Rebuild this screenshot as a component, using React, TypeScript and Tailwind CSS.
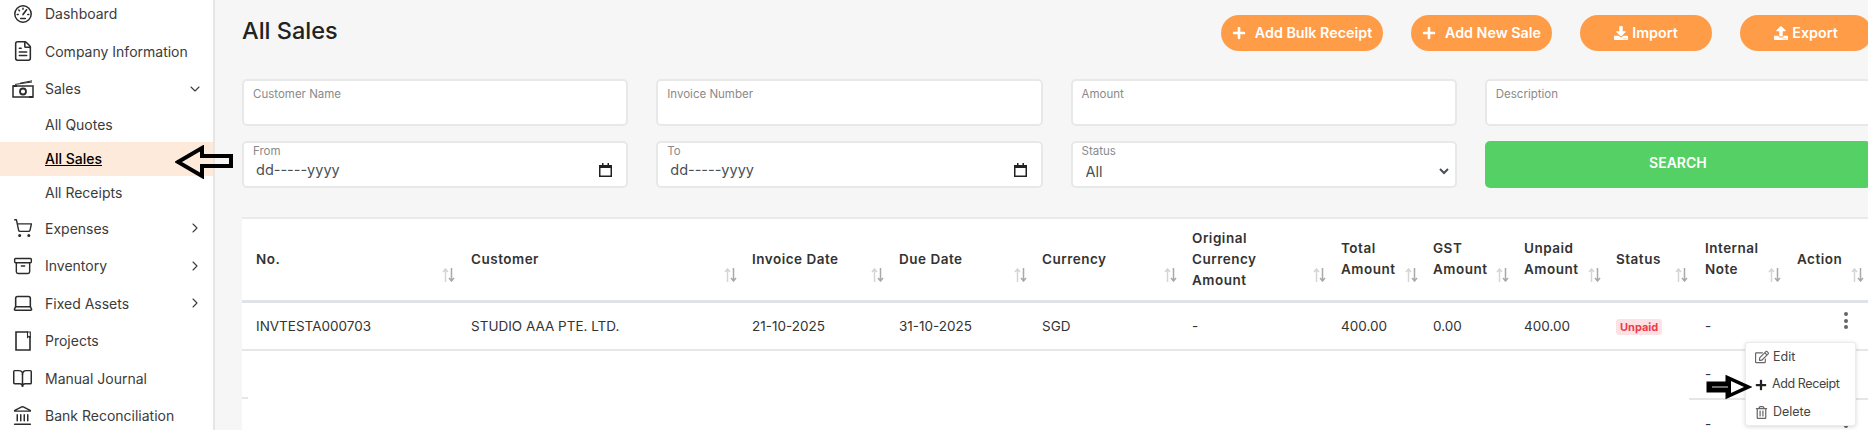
import type { ReactNode } from "react";
import {
  Archive,
  BookOpen,
  ChevronDown,
  ChevronRight,
  FileText,
  Landmark,
  Laptop,
  ShoppingCart,
} from "lucide-react";
import { FaDownload, FaPlus, FaRegEdit, FaRegTrashAlt, FaUpload } from "react-icons/fa";

function DashboardIcon() {
  return (
    <svg width="20" height="20" viewBox="0 0 20 20" fill="none" stroke="currentColor" strokeWidth="1.5" strokeLinecap="round">
      <circle cx="10" cy="10" r="8.2" />
      <path d="M10 10.5 13.6 5.8" strokeWidth="1.7" />
      <path d="M10 4.2v1M5.8 6l.7.7M4.2 10.5h1M14.8 10.5h1" />
      <path d="M7.6 14.4h4.8" />
    </svg>
  );
}

function MoneyIcon() {
  return (
    <svg width="22" height="18" viewBox="0 0 22 18" fill="none" stroke="currentColor" strokeWidth="1.5">
      <rect x="1" y="6" width="20" height="11" />
      <circle cx="11" cy="11.5" r="3" strokeWidth="1.8" />
      <path d="M3 4.4 20 2M8 3.2 20 .8" strokeWidth="1" />
      <path d="M1 6h4M17 17h4" strokeWidth="2" />
    </svg>
  );
}

function NotebookIcon() {
  return (
    <svg width="18" height="20" viewBox="0 0 18 20" fill="none" stroke="currentColor" strokeWidth="1.6">
      <path d="M14 1H2v18h14V5" />
      <path d="M13.5 1h2.8v5.5l-1.4-1-1.4 1z" strokeWidth="1.1" />
    </svg>
  );
}

function NavItem({ icon, label, chevron }: { icon: ReactNode; label: string; chevron?: "down" | "right" }) {
  return (
    <div className="flex h-[37.5px] items-center text-[#3b3b3b]">
      <div className="flex w-[45px] flex-none justify-center pl-[3px] pr-[3px] text-[#2b2b2b]">{icon}</div>
      <span className="flex-1 text-[14px]">{label}</span>
      {chevron === "down" && <ChevronDown className="mr-[10px] size-4" strokeWidth={1.6} />}
      {chevron === "right" && <ChevronRight className="mr-[10px] size-4" strokeWidth={1.6} />}
    </div>
  );
}

function Sidebar() {
  return (
    <aside className="h-[430px] w-[215px] flex-none overflow-hidden border-r-2 border-[#e6e6e6] bg-white">
      <div className="-mt-[5px]">
        <NavItem icon={<DashboardIcon />} label="Dashboard" />
        <NavItem icon={<FileText className="size-[22px]" strokeWidth={1.7} />} label="Company Information" />
        <NavItem icon={<MoneyIcon />} label="Sales" chevron="down" />
        <div className="flex h-[34px] items-center pl-[45px] text-[14px] text-[#3b3b3b]">All Quotes</div>
        <div className="flex h-[34px] items-center bg-[#fdeadb] pl-[45px] text-[14px] font-medium text-black underline">All Sales</div>
        <div className="flex h-[34px] items-center pl-[45px] text-[14px] text-[#3b3b3b]">All Receipts</div>
        <NavItem icon={<ShoppingCart className="size-5" strokeWidth={1.7} />} label="Expenses" chevron="right" />
        <NavItem icon={<Archive className="size-5" strokeWidth={1.7} />} label="Inventory" chevron="right" />
        <NavItem icon={<Laptop className="size-[22px]" strokeWidth={1.7} />} label="Fixed Assets" chevron="right" />
        <NavItem icon={<NotebookIcon />} label="Projects" />
        <NavItem icon={<BookOpen className="size-[21px]" strokeWidth={1.7} />} label="Manual Journal" />
        <NavItem icon={<Landmark className="size-[21px]" strokeWidth={1.7} />} label="Bank Reconciliation" />
      </div>
    </aside>
  );
}

function OrangeButton({ icon, label, className }: { icon: ReactNode; label: string; className: string }) {
  return (
    <button className={`flex h-9 items-center justify-center rounded-[18px] bg-[#ff9c47] pb-[1px] text-[14.3px] font-semibold text-white ${className}`}>
      {icon}
      {label}
    </button>
  );
}

function TextField({ label }: { label: string }) {
  return (
    <div className="h-[47px] rounded-[5px] border-2 border-[#e8e8e8] bg-white px-[9px] pt-[5px]">
      <label className="block text-[11.5px] leading-[16px] text-[#8a8a8a]">{label}</label>
      <input className="w-full text-[14px] outline-none" />
    </div>
  );
}

function DateField({ label }: { label: string }) {
  return (
    <div className="h-[47px] rounded-[5px] border-2 border-[#e8e8e8] bg-white pl-[9px] pr-[14px] pt-[1px]">
      <label className="block text-[11.5px] leading-[15px] text-[#8a8a8a]">{label}</label>
      <div className="flex items-center">
        <input readOnly value="dd-----yyyy" className="w-full pl-[3px] text-[14.5px] leading-[22px] text-[#495057] outline-none" />
        <svg width="13" height="14" viewBox="0 0 13 14" className="flex-none">
          <path d="M3 0h1.5v2h4V0H10v2h3v12H0V2h3z" fill="#222" />
          <rect x="1.5" y="5" width="10" height="7.5" fill="#fff" />
        </svg>
      </div>
    </div>
  );
}

function SortIcon() {
  return (
    <svg width="13" height="14" viewBox="0 0 13 14" className="absolute bottom-[18px] right-[1px]" fill="none" strokeWidth="1.5">
      <path d="M3.5 14V1.5M1 4l2.5-3L6 4" stroke="#d5d5d5" />
      <path d="M9.5 0v12.5M7 10l2.5 3 2.5-3" stroke="#a9a9a9" />
    </svg>
  );
}

const columns = [
  { label: "No.", width: "w-[214px]", pad: "pl-[14px]" },
  { label: "Customer", width: "w-[282px]", pad: "pl-[15px]" },
  { label: "Invoice Date", width: "w-[147px]", pad: "pl-[14px]" },
  { label: "Due Date", width: "w-[143px]", pad: "pl-[14px]" },
  { label: "Currency", width: "w-[150px]", pad: "pl-[14px]" },
  { label: "Original\nCurrency\nAmount", width: "w-[149px]", pad: "pl-[14px]" },
  { label: "Total\nAmount", width: "w-[92px]", pad: "pl-[14px]" },
  { label: "GST\nAmount", width: "w-[91px]", pad: "pl-[14px]" },
  { label: "Unpaid\nAmount", width: "w-[92px]", pad: "pl-[14px]" },
  { label: "Status", width: "w-[87px]", pad: "pl-[14px]" },
  { label: "Internal\nNote", width: "w-[93px]", pad: "pl-[16px]" },
  { label: "Action", width: "w-[83px]", pad: "pl-[15px]" },
];

function Kebab() {
  return (
    <div className="mb-[10px] ml-[62px] flex w-[4px] flex-col gap-[2.5px]">
      <span className="size-[4px] rounded-full bg-[#666]" />
      <span className="size-[4px] rounded-full bg-[#666]" />
      <span className="size-[4px] rounded-full bg-[#666]" />
    </div>
  );
}

function SalesTable() {
  return (
    <div className="mt-[29px] w-[1630px] border-t-2 border-[#e9e9ee] bg-white">
      <table className="w-[1630px] table-fixed border-collapse text-[13.5px] text-[#333]">
        <thead>
          <tr className="h-[82px] border-b-[3px] border-[#dfe2e7]">
            {columns.map((col) => (
              <th
                key={col.label}
                className={`relative whitespace-pre-line text-left align-middle font-semibold leading-[21px] tracking-[0.5px] text-[#333] ${col.width} ${col.pad}`}
              >
                {col.label}
                <SortIcon />
              </th>
            ))}
            <th className="w-[7px]" />
          </tr>
        </thead>
        <tbody>
          <tr className="h-[49px] border-b-2 border-[#e6e6e6]">
            <td className="pl-[14px]">INVTESTA000703</td>
            <td className="pl-[15px]">STUDIO AAA PTE. LTD.</td>
            <td className="pl-[14px]">21-10-2025</td>
            <td className="pl-[14px]">31-10-2025</td>
            <td className="pl-[14px]">SGD</td>
            <td className="pl-[14px]">-</td>
            <td className="pl-[14px]">400.00</td>
            <td className="pl-[14px]">0.00</td>
            <td className="pl-[14px]">400.00</td>
            <td className="pl-[14px]">
              <span className="inline-block h-4 rounded-[3px] bg-[#fde2e5] px-[4px] text-[11px] font-bold leading-4 text-[#ee3b4a]">Unpaid</span>
            </td>
            <td className="pl-[16px]">-</td>
            <td>
              <Kebab />
            </td>
            <td />
          </tr>
          <tr className="h-[49px]">
            <td colSpan={10} className="relative">
              <span className="absolute bottom-0 left-0 h-[2px] w-[6px] bg-[#e6e6e6]" />
            </td>
            <td className="border-b-2 border-[#e6e6e6] pl-[16px]">-</td>
            <td className="border-b-2 border-[#e6e6e6]">
              <Kebab />
            </td>
            <td className="border-b-2 border-[#e6e6e6]" />
          </tr>
          <tr className="h-[49px]">
            <td colSpan={10} />
            <td className="pl-[16px]">-</td>
            <td>
              <Kebab />
            </td>
            <td />
          </tr>
        </tbody>
      </table>
    </div>
  );
}

function ActionMenu() {
  return (
    <div className="absolute left-[1745px] top-[342px] flex h-[84px] w-[111px] flex-col justify-center gap-[5.5px] rounded-[3px] border border-[#ececec] bg-white pl-[9px] pt-[1px] text-[12.5px] text-[#444] shadow-[0_1px_4px_rgba(0,0,0,0.15)]">
      <div className="flex h-[22px] items-center gap-[4px]">
        <FaRegEdit className="size-[14px] text-[#666]" />
        Edit
      </div>
      <div className="flex h-[22px] items-center gap-[4px]">
        <FaPlus className="size-[12px] text-[#222]" />
        <span className="pl-[1px] tracking-[-0.4px]">Add Receipt</span>
      </div>
      <div className="flex h-[22px] items-center gap-[4px]">
        <FaRegTrashAlt className="size-[13px] text-[#666]" />
        <span className="pl-[1px]">Delete</span>
      </div>
    </div>
  );
}

export default function App() {
  return (
    <div className="relative flex h-[430px] w-[1868px] overflow-hidden bg-[#f6f6f6] font-['Inter',sans-serif]">
      <Sidebar />
      <main className="w-[1657px] flex-none pl-[27px] pt-[15px]">
        <div className="flex h-9 items-center">
          <h1 className="-mt-[5px] text-[23.5px] font-medium text-[#222]">All Sales</h1>
          <div className="ml-auto flex gap-[28px]">
            <OrangeButton icon={<FaPlus className="mr-[9px] size-[14px]" />} label="Add Bulk Receipt" className="w-[162px]" />
            <OrangeButton icon={<FaPlus className="mr-[9px] size-[14px]" />} label="Add New Sale" className="w-[141px]" />
            <OrangeButton icon={<FaDownload className="mr-[4px] size-[14px]" />} label="Import" className="w-[132px]" />
            <OrangeButton icon={<FaUpload className="mr-[4px] size-[14px]" />} label="Export" className="w-[132px]" />
          </div>
        </div>
        <div className="mt-[28px] grid w-[1629px] grid-cols-4 gap-x-[28px] gap-y-[15px]">
          <TextField label="Customer Name" />
          <TextField label="Invoice Number" />
          <TextField label="Amount" />
          <TextField label="Description" />
          <DateField label="From" />
          <DateField label="To" />
          <div className="h-[47px] rounded-[5px] border-2 border-[#e8e8e8] bg-white pl-[9px] pr-[3px] pt-[1px]">
            <label className="block text-[11.5px] leading-[15px] text-[#8a8a8a]">Status</label>
            <select className="w-full text-[14.5px] leading-[22px] text-[#495057] outline-none">
              <option>All</option>
            </select>
          </div>
          <button className="h-[47px] rounded-[5px] bg-[#54d065] pb-[4px] text-[14px] font-semibold text-white">SEARCH</button>
        </div>
        <SalesTable />
      </main>
      <ActionMenu />
      <svg width="60" height="34" viewBox="0 0 60 34" className="absolute left-[175px] top-[145px]" fill="none" stroke="#000" strokeWidth="4">
        <path d="M3 17 27 3v8h29v10H27v10z" />
      </svg>
      <svg width="46" height="26" viewBox="0 0 46 26" className="absolute left-[1706px] top-[374px]" fill="#000" stroke="#000" strokeWidth="3">
        <path d="M2 9h19V3l22 10-22 10v-6H2z" />
        <path d="M25 7 38 13 25 19z" fill="#fff" strokeWidth="0" />
        <path d="M6 12.5h16v1H6z" fill="#ddd" strokeWidth="0" />
      </svg>
    </div>
  );
}
